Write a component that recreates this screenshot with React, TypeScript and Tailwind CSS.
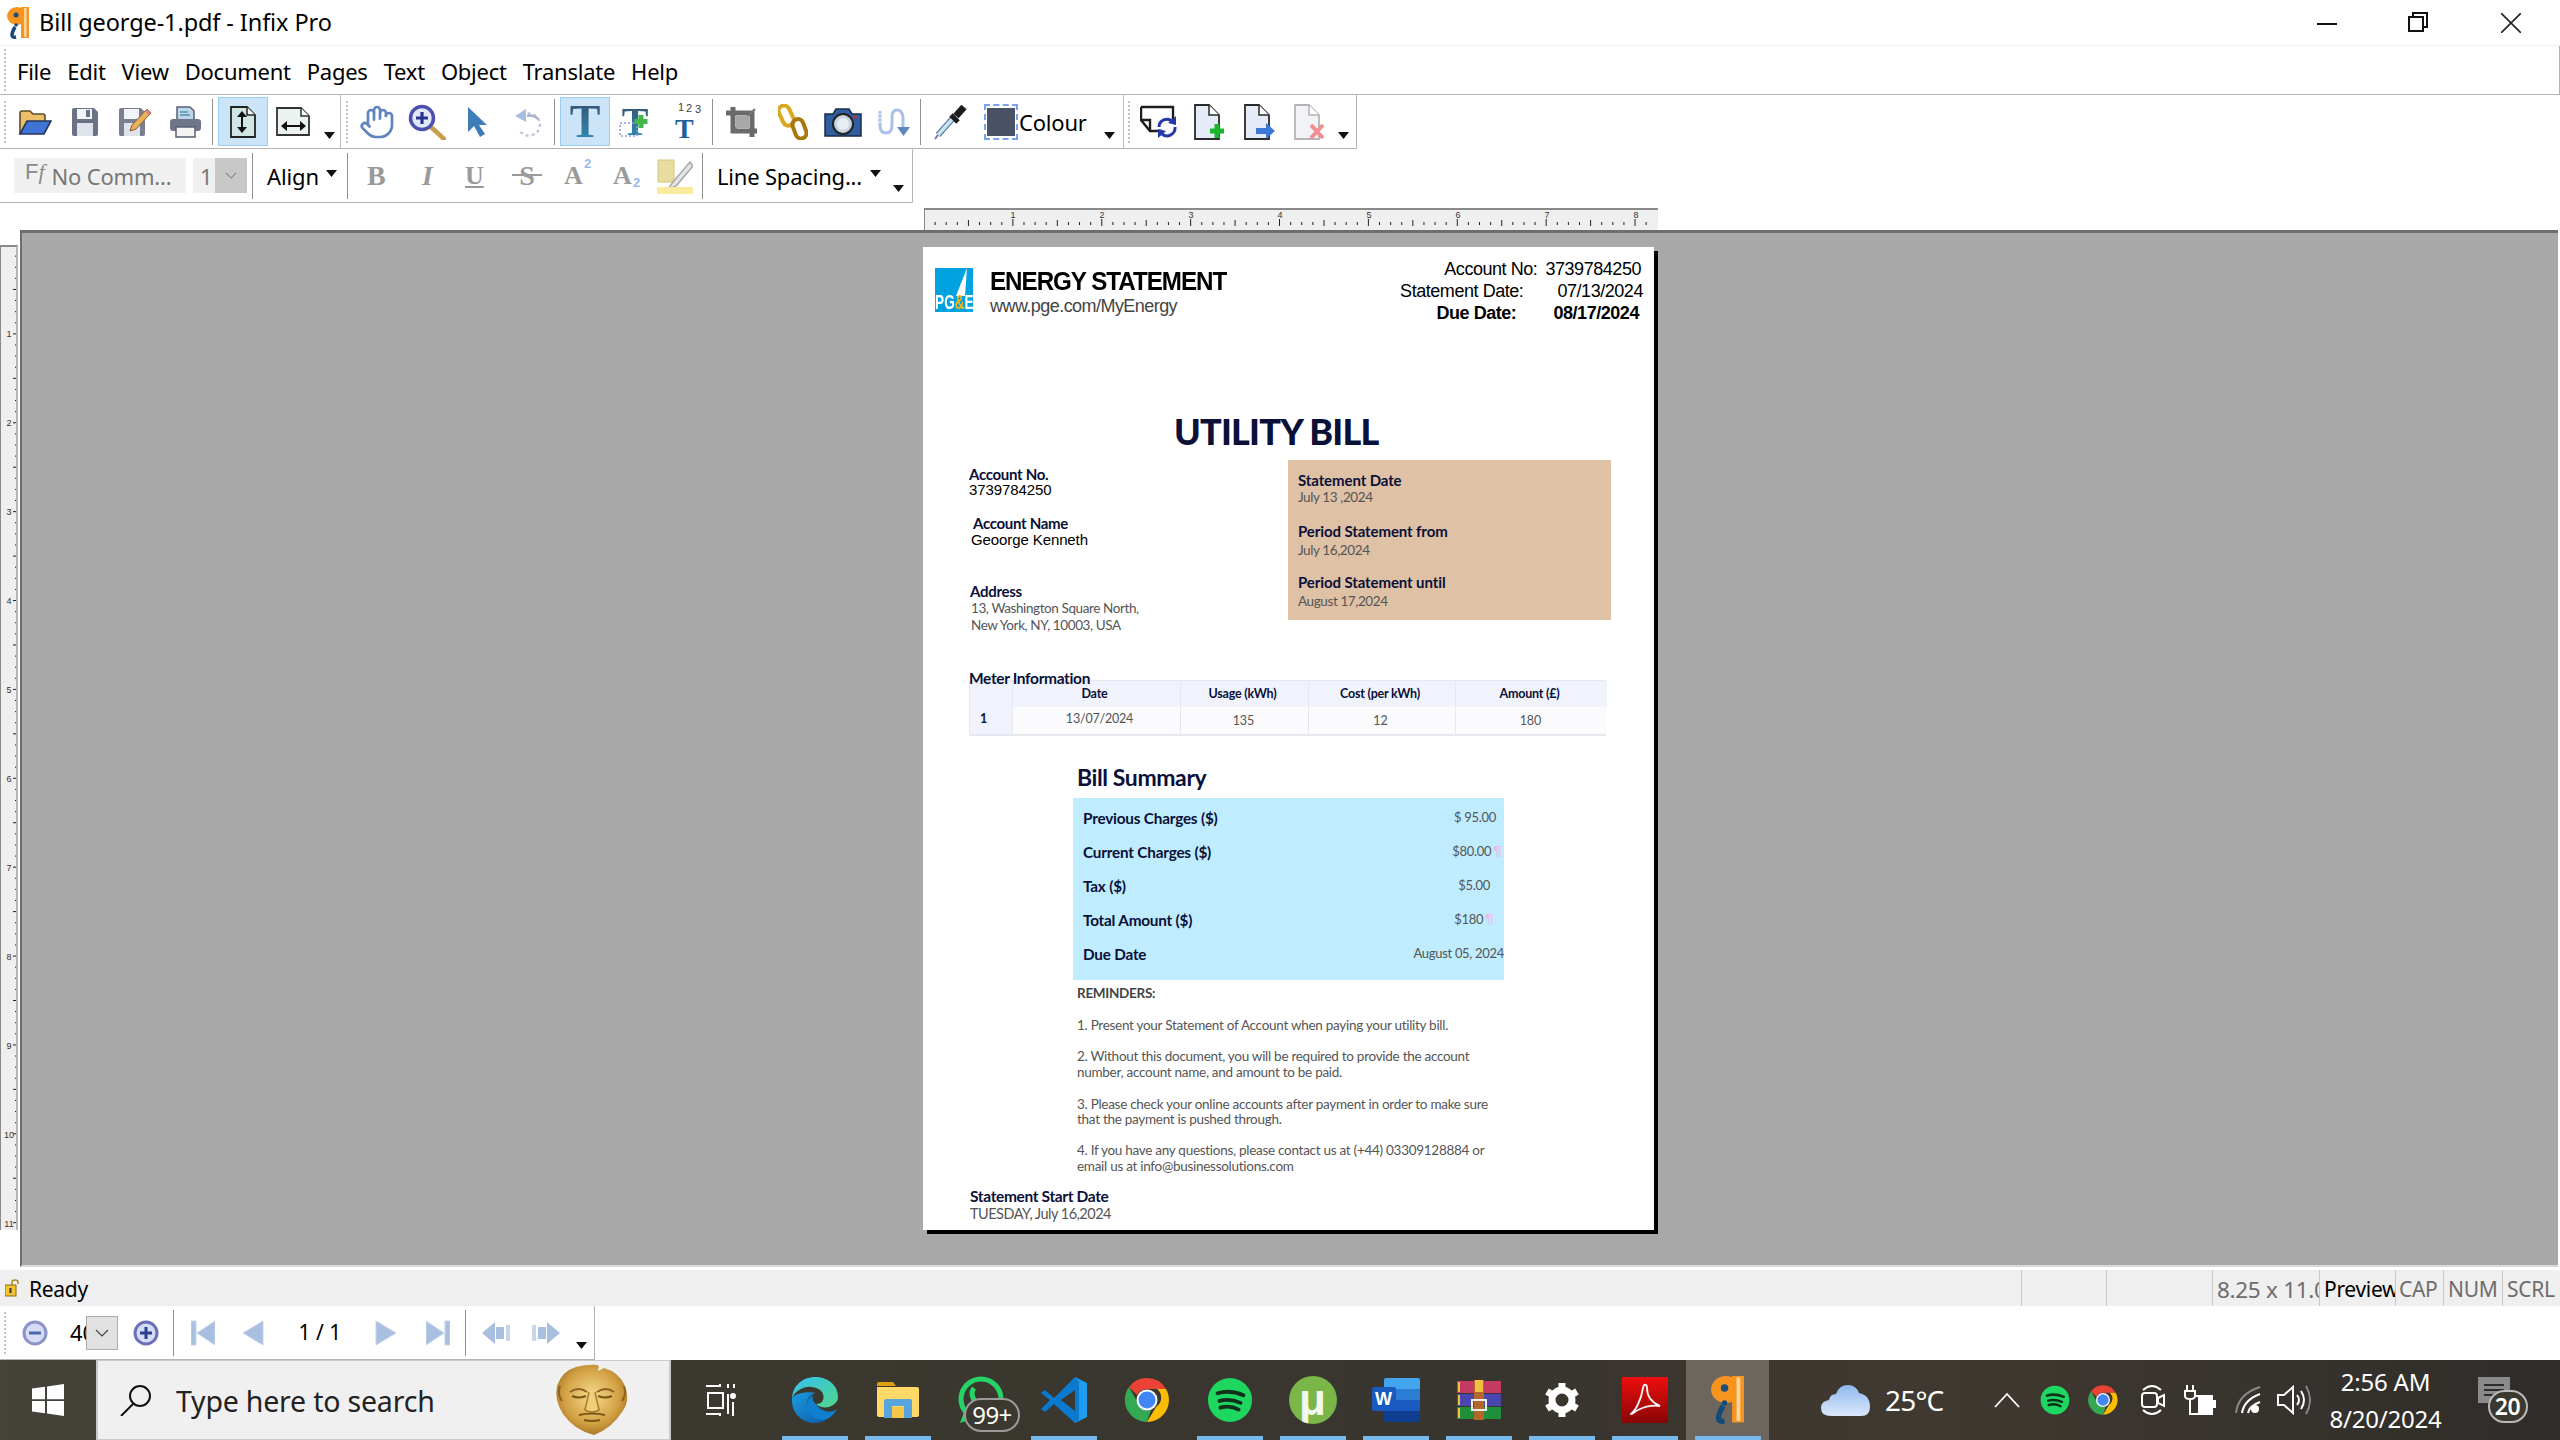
import React from 'react';
import { Hand } from 'lucide-react';

const uiFont = { fontFamily: '"Noto Sans", sans-serif' };
const serif = { fontFamily: '"Liberation Serif", serif' };

const Caret: React.FC<{ className?: string }> = ({ className }) => (
  <svg width="11" height="7" viewBox="0 0 11 7" className={className}>
    <polygon points="0,0 11,0 5.5,7" fill="#111" />
  </svg>
);

const Grip: React.FC = () => (
  <div className="h-[42px] w-0 border-l-2 border-dotted border-[#c4c4c4]" />
);

const Sep: React.FC<{ className?: string }> = ({ className }) => (
  <div className={`h-[46px] w-px bg-[#8f8f8f] ${className ?? ''}`} />
);

const Slot: React.FC<{ active?: boolean; children: React.ReactNode }> = ({ active, children }) => (
  <div
    className={`flex h-[49px] w-[50px] shrink-0 items-center justify-center ${
      active ? 'border border-[#99ccee] bg-[#cce4f7]' : ''
    }`}
  >
    {children}
  </div>
);

/* toolbar drawings */
const FolderIcon = () => (
  <svg width="34" height="28" viewBox="0 0 34 28">
    <path d="M2 26V5q0-2 2-2h8l3 3h10q2 0 2 2v5" fill="#ecc06b" stroke="#5d4c28" strokeWidth="1.6" />
    <path d="M2 26l7-13h24l-7 13z" fill="#3f74d6" stroke="#27345a" strokeWidth="1.6" />
  </svg>
);
const SaveIcon = () => (
  <svg width="28" height="30" viewBox="0 0 28 30">
    <path d="M1 3q0-2 2-2h20l4 4v22q0 2-2 2H3q-2 0-2-2z" fill="#6a7286" />
    <rect x="6" y="2" width="15" height="10" fill="#f2f4f8" />
    <rect x="6" y="16" width="16" height="13" fill="#dfe3ea" />
    <rect x="15" y="3" width="4" height="7" fill="#6a7286" />
  </svg>
);
const SaveAsIcon = () => (
  <svg width="34" height="30" viewBox="0 0 34 30">
    <path d="M1 3q0-2 2-2h20l4 4v22q0 2-2 2H3q-2 0-2-2z" fill="#7a8092" />
    <rect x="6" y="2" width="15" height="10" fill="#f2f4f8" />
    <rect x="6" y="16" width="16" height="13" fill="#dfe3ea" />
    <path d="M29 2l4 4-15 16-6 2 2-6z" fill="#e8b25a" stroke="#8a5a36" strokeWidth="1" />
    <path d="M29 2l4 4-2 2-4-4z" fill="#d9808a" />
  </svg>
);
const PrintIcon = () => (
  <svg width="33" height="32" viewBox="0 0 33 32">
    <path d="M8 1h13l4 4v10H8z" fill="#b9d6ea" stroke="#596072" strokeWidth="1.5" />
    <path d="M11 6h8M11 9h10" stroke="#5a8fb0" strokeWidth="1.4" />
    <rect x="1" y="13" width="31" height="12" rx="3" fill="#6f7689" />
    <rect x="7" y="21" width="19" height="10" fill="#f4f4f4" stroke="#596072" strokeWidth="1.5" />
  </svg>
);
const FitHeightIcon = () => (
  <svg width="26" height="32" viewBox="0 0 26 32">
    <path d="M1 1h16l8 8v22H1z" fill="#cfe6e4" stroke="#222" strokeWidth="1.8" />
    <path d="M17 1v8h8" fill="#f4f4f4" stroke="#222" strokeWidth="1.5" />
    <path d="M12 6v20" stroke="#111" strokeWidth="2" />
    <path d="M7 11l5-6 5 6zM7 21l5 6 5-6z" fill="#111" />
  </svg>
);
const FitWidthIcon = () => (
  <svg width="37" height="30" viewBox="0 0 37 30">
    <path d="M2 1h24l8 8v19H2z" fill="#eaf2f2" stroke="#333" strokeWidth="1.8" />
    <path d="M26 1v8h8" fill="#f8f8f8" stroke="#333" strokeWidth="1.5" />
    <path d="M7 19h23" stroke="#111" strokeWidth="2" />
    <path d="M12 14l-6 5 6 5zM25 14l6 5-6 5z" fill="#111" />
  </svg>
);
const ZoomIcon = () => (
  <svg width="38" height="36" viewBox="0 0 38 36">
    <path d="M23 23l13 12" stroke="#c79f4a" strokeWidth="4.5" strokeLinecap="round" />
    <circle cx="14" cy="14" r="11.5" fill="#e2e8fb" stroke="#4c4fae" strokeWidth="3.5" />
    <path d="M14 8v12M8 14h12" stroke="#28338f" strokeWidth="3.2" />
  </svg>
);
const CursorIcon = () => (
  <svg width="20" height="30" viewBox="0 0 20 30">
    <path d="M1 0v25l6-6 6 11 5-3-6-9h8z" fill="#3f7db8" />
  </svg>
);
const UndoIcon = () => (
  <svg width="28" height="30" viewBox="0 0 28 30">
    <path d="M8 9a11 11 0 1 1-2 15" fill="none" stroke="#bcc7da" strokeWidth="2.4" strokeDasharray="3 3" />
    <path d="M13 9A11 11 0 0 1 24 12" fill="none" stroke="#a9b4c8" strokeWidth="2.4" />
    <polygon points="1,9 12,2 12,15" fill="#a8bcdc" />
  </svg>
);
const SerifT: React.FC<{ className: string }> = ({ className }) => (
  <span
    className={`bg-linear-to-b from-[#34506f] to-[#2a93bb] bg-clip-text leading-none font-bold text-transparent ${className}`}
    style={serif}
  >
    T
  </span>
);
const TPlusIcon = () => (
  <div className="relative flex h-[36px] w-[32px] items-center justify-center">
    <SerifT className="text-[40px]" />
    <svg width="32" height="36" viewBox="0 0 32 36" className="absolute top-0 left-0">
      <rect x="1" y="19" width="17" height="13" fill="none" stroke="#8d9be0" strokeWidth="1.5" strokeDasharray="2 2" />
      <path d="M22 11v13M15.500 17.500h13" stroke="#42b84a" strokeWidth="5" />
    </svg>
  </div>
);
const T123Icon = () => (
  <div className="relative h-[40px] w-[30px] text-[11px] leading-none text-[#444]" style={{ fontFamily: '"Liberation Sans", sans-serif' }}>
    <span className="absolute top-0 left-[6px]">1</span>
    <span className="absolute top-[1px] left-[14px]">2</span>
    <span className="absolute top-[2px] left-[23px]">3</span>
    <span className="absolute top-[13px] left-[3px] text-[28px] leading-none font-bold text-[#1f5f9e]" style={serif}>
      T
    </span>
  </div>
);
const CropIcon = () => (
  <svg width="36" height="34" viewBox="0 0 36 34">
    <path d="M8 2v24h24M1 8h26v24" fill="none" stroke="#6a6a6a" strokeWidth="5" />
    <path d="M10 24L30 4" stroke="#777" strokeWidth="2" />
    <rect x="11" y="11" width="13" height="12" fill="#a8a8a8" />
  </svg>
);
const LinkIcon = () => (
  <svg width="30" height="36" viewBox="0 0 30 36">
    <rect x="2" y="-1" width="11" height="21" rx="5.500" transform="rotate(-25 8 10) translate(0 2)" fill="none" stroke="#d9a81e" strokeWidth="4" />
    <rect x="16" y="15" width="11" height="20" rx="5.500" transform="rotate(-20 21 25)" fill="none" stroke="#a8780c" strokeWidth="4" />
  </svg>
);
const CameraIcon = () => (
  <svg width="38" height="30" viewBox="0 0 38 30">
    <path d="M1 7h8l3-5h13l3 5h9v22H1z" fill="#2f5f9e" stroke="#1c2b48" strokeWidth="1.5" />
    <circle cx="19" cy="17" r="10" fill="#c8d4e2" stroke="#222" strokeWidth="2" />
    <circle cx="19" cy="17" r="6" fill="#e6edf4" />
    <circle cx="31" cy="10" r="1.500" fill="#e02020" />
  </svg>
);
const PathIcon = () => (
  <svg width="34" height="30" viewBox="0 0 34 30">
    <path d="M2 4v14q0 8 6 8t6-8V10q0-7 5-7t6 7v13" fill="none" stroke="#a9c1e4" strokeWidth="3" />
    <path d="M2 2v14" stroke="#fff" strokeWidth="1" strokeDasharray="2 2" />
    <polygon points="19,20 32,20 25.500,29" fill="#5f87bf" />
  </svg>
);
const PipetteIcon = () => (
  <svg width="34" height="36" viewBox="0 0 34 36">
    <path d="M4 31L20 13" stroke="#5a78a8" strokeWidth="6" />
    <path d="M4 31L20 13" stroke="#c9e4ee" strokeWidth="3.500" />
    <path d="M1 35l3-4" stroke="#7a70b8" strokeWidth="2" />
    <path d="M17 11l7 7" stroke="#1d1d1d" strokeWidth="5" />
    <path d="M22 12l8-9" stroke="#1d1d1d" strokeWidth="7" />
  </svg>
);
const SyncIcon = () => (
  <svg width="38" height="36" viewBox="0 0 38 36">
    <path d="M1 3h32v14M1 3v13l9 11h12" fill="#fff" stroke="#1d1d1d" strokeWidth="2.400" />
    <path d="M1 16h9v11" fill="none" stroke="#1d1d1d" strokeWidth="2.400" />
    <path d="M19 23a8 8 0 0 1 13-6" fill="none" stroke="#2438a8" strokeWidth="3" />
    <path d="M35 23a8 8 0 0 1-13 7" fill="none" stroke="#2438a8" strokeWidth="3" />
    <polygon points="36,12 36,21 28,19" fill="#2438a8" />
    <polygon points="18,34 18,25 26,27" fill="#2438a8" />
  </svg>
);
const PageBase: React.FC<{ faded?: boolean; children?: React.ReactNode }> = ({ faded, children }) => (
  <svg width="32" height="36" viewBox="0 0 32 36">
    <path
      d="M1 1h14l10 10v24H1z"
      fill={faded ? '#f1f3f6' : '#e6ecf7'}
      stroke={faded ? '#b5b5b5' : '#2a2a2a'}
      strokeWidth="1.800"
    />
    <path d="M15 1v10h10" fill="#fff" stroke={faded ? '#b5b5b5' : '#2a2a2a'} strokeWidth="1.500" />
    {children}
  </svg>
);
const Navs = {
  first: 'M0 1h5v24H0zM24 1v24L6 13z',
  prev: 'M21 1v24L1 13z',
  next: 'M1 1v24l20-12z',
  last: 'M19 1h5v24h-5zM0 1v24l18-12z',
};
const NavIcon: React.FC<{ d: string }> = ({ d }) => (
  <svg width="24" height="26" viewBox="0 0 24 26">
    <path d={d} fill="#a9bfe0" stroke="#c5d3ea" strokeWidth="1" />
  </svg>
);
const RoundIcon: React.FC<{ plus?: boolean }> = ({ plus }) => (
  <svg width="26" height="26" viewBox="0 0 26 26">
    <circle cx="13" cy="13" r="11" fill="#d5dcf3" stroke={plus ? '#6a70b8' : '#8c93c8'} strokeWidth="3" />
    <path d={plus ? 'M13 7v12M7 13h12' : 'M7 13h12'} stroke={plus ? '#28408f' : '#4a68a8'} strokeWidth="3" />
  </svg>
);
const GhostArrow: React.FC<{ flip?: boolean }> = ({ flip }) => (
  <svg width="30" height="24" viewBox="0 0 30 24" className={flip ? '-scale-x-100' : ''}>
    <path d="M0 12L13 1v22z" fill="#a9bfe0" />
    <rect x="14" y="6" width="8" height="12" fill="#a9bfe0" />
    <rect x="24" y="4" width="4" height="16" fill="#c9d6ea" />
  </svg>
);

/* app logos in the taskbar */
const ChromeIcon: React.FC<{ size: number }> = ({ size }) => (
  <svg width={size} height={size} viewBox="0 0 48 48">
    <path d="M24 2a22 22 0 0 1 19 11H24a11 11 0 0 0-10 6L6 11A22 22 0 0 1 24 2z" fill="#ea4335" />
    <path d="M43 13a22 22 0 0 1-19 33l9-15a11 11 0 0 0 1-18z" fill="#fbbc04" />
    <path d="M24 46A22 22 0 0 1 6 11l9 16a11 11 0 0 0 13 7z" fill="#34a853" />
    <circle cx="24" cy="24" r="10.500" fill="#fff" />
    <circle cx="24" cy="24" r="8.500" fill="#4285f4" />
  </svg>
);
const SpotifyIcon: React.FC<{ size: number }> = ({ size }) => (
  <svg width={size} height={size} viewBox="0 0 48 48">
    <circle cx="24" cy="24" r="23" fill="#1ed760" />
    <path d="M11 17q13-4 27 2M13 25q11-3 22 2M14 32q10-3 19 2" fill="none" stroke="#10301c" strokeWidth="4" strokeLinecap="round" />
  </svg>
);
const EdgeIcon = () => (
  <svg width="48" height="48" viewBox="0 0 48 48">
    <defs>
      <linearGradient id="edge-a" x1="0" y1="0" x2="1" y2="1">
        <stop offset="0" stopColor="#35c1f1" />
        <stop offset="1" stopColor="#4fd68a" />
      </linearGradient>
      <linearGradient id="edge-b" x1="0" y1="0" x2="1" y2="1">
        <stop offset="0" stopColor="#1b9de2" />
        <stop offset="1" stopColor="#0c59a4" />
      </linearGradient>
    </defs>
    <path d="M24 1C11 1 2 10 1 22c4-8 12-12 20-11 10 1 13 8 11 13-1 3-4 4-7 4 3 3 8 4 13 3 5-2 9-5 9-10C47 9 37 1 24 1z" fill="url(#edge-a)" />
    <path d="M1 22C0 36 10 47 24 47c5 0 10-2 14-5-9 3-20-1-22-10-2-8 3-14 9-15-9-2-20 0-24 5z" fill="url(#edge-b)" />
    <path d="M25 28c-3-2-4-6-3-9-8 4-9 15-2 21 5 4 12 5 18 2 3-2 6-5 8-9-6 5-16 3-21-5z" fill="#0f7fd0" />
  </svg>
);
const ExplorerIcon = () => (
  <svg width="44" height="38" viewBox="0 0 44 38">
    <path d="M1 3q0-2 2-2h14l3 4H1z" fill="#d9a00f" />
    <path d="M1 6h40q2 0 2 2v26q0 2-2 2H3q-2 0-2-2z" fill="#ffd968" />
    <path d="M8 37V20q0-2 2-2h24q2 0 2 2v17h-8V25H16v12z" fill="#5aa4dd" />
    <rect x="16" y="26" width="12" height="11" fill="#f4c64a" />
  </svg>
);
const WhatsAppIcon = () => (
  <svg width="48" height="50" viewBox="0 0 48 50">
    <circle cx="24" cy="24" r="20" fill="none" stroke="#25d366" strokeWidth="5" />
    <path d="M8 34L3 48l14-5z" fill="#25d366" />
    <path d="M17 13q-4 5 0 12t13 11" fill="none" stroke="#25d366" strokeWidth="5" />
  </svg>
);
const VsCodeIcon = () => (
  <svg width="48" height="48" viewBox="0 0 48 48">
    <path d="M35 1l12 6v34l-12 6z" fill="#1f9cf0" />
    <path d="M35 1L14 22 5 14 1 17l9 7-9 9 4 3 9-8 21 19 4-3V6z" fill="#0a7ad0" />
    <path d="M35 14L21 24l14 11z" fill="#3a3830" />
  </svg>
);
const UTorrentIcon = () => (
  <div className="relative flex h-[48px] w-[48px] items-center justify-center overflow-hidden rounded-full bg-[#7ab648]">
    <span className="text-[44px] leading-none font-bold text-[#f4f6ef]" style={{ fontFamily: '"Liberation Sans", sans-serif' }}>
      μ
    </span>
  </div>
);
const WordIcon = () => (
  <div className="relative h-[44px] w-[48px]">
    <div className="absolute top-0 right-0 h-[44px] w-[36px] rounded-[2px] bg-[linear-gradient(180deg,#41a5ee_0%,#41a5ee_25%,#2b7cd3_25%,#2b7cd3_50%,#185abd_50%,#185abd_75%,#103f91_75%)]" />
    <div className="absolute top-[9px] left-0 flex h-[24px] w-[24px] items-center justify-center rounded-[2px] bg-[#185abd] text-[18px] font-bold text-white" style={{ fontFamily: '"Liberation Sans", sans-serif' }}>
      W
    </div>
  </div>
);
const RarIcon = () => (
  <svg width="46" height="40" viewBox="0 0 46 40">
    <rect x="1" y="1" width="44" height="12" fill="#c43a62" />
    <rect x="1" y="14" width="44" height="12" fill="#4a46b0" />
    <rect x="1" y="27" width="44" height="12" fill="#1f8f3a" />
    <rect x="2" y="2" width="2" height="10" fill="#f0c040" />
    <rect x="2" y="15" width="2" height="10" fill="#f0c040" />
    <rect x="2" y="28" width="2" height="10" fill="#f0c040" />
    <rect x="18" y="0" width="10" height="40" fill="#b5662a" />
    <rect x="19" y="0" width="8" height="12" fill="#f0c040" />
    <rect x="16" y="20" width="14" height="10" fill="none" stroke="#eee" strokeWidth="2" />
  </svg>
);
const GearIcon = () => (
  <svg width="36" height="36" viewBox="0 0 36 36">
    <circle cx="18" cy="18" r="10" fill="none" stroke="#fff" strokeWidth="7" />
    <path d="M18 1v7M18 28v7M3 9.500l6 3.500M27 23l6 3.500M3 26.500L9 23M27 13l6-3.500" stroke="#fff" strokeWidth="7" />
  </svg>
);
const AcrobatIcon = () => (
  <svg width="46" height="46" viewBox="0 0 46 46">
    <defs>
      <linearGradient id="acro" x1="0" y1="0" x2="0" y2="1">
        <stop offset="0" stopColor="#ee0f0f" />
        <stop offset="1" stopColor="#880505" />
      </linearGradient>
    </defs>
    <rect width="46" height="46" fill="url(#acro)" />
    <path d="M9 37c5-4 10-14 12-26 1-5 4-4 4 0 0 9 6 15 13 18-8-1-16 1-22 4-4 2-6 5-7 4z" fill="none" stroke="#f4f4f4" strokeWidth="1.800" />
  </svg>
);
const InfixIcon: React.FC<{ size: number }> = ({ size }) => (
  <svg width={size * 0.69} height={size} viewBox="0 0 22 32">
    <ellipse cx="10" cy="9" rx="10" ry="9" fill="#f7941d" />
    <rect x="14" y="0" width="8" height="31" fill="#f7941d" />
    <rect x="17" y="1" width="2.500" height="29" fill="#fcd5a0" />
    <circle cx="9" cy="8" r="2.500" fill="#1f4f78" />
    <path d="M8 20q-3 5-3 8 0 3 4 2" fill="none" stroke="#14497a" strokeWidth="3.500" />
    <circle cx="9" cy="18" r="1.800" fill="#14497a" />
  </svg>
);
const MaskIcon = () => (
  <svg width="76" height="72" viewBox="0 0 76 72">
    <defs>
      <radialGradient id="mask" cx="0.5" cy="0.45" r="0.6">
        <stop offset="0" stopColor="#f6dc8e" />
        <stop offset="0.65" stopColor="#d3a043" />
        <stop offset="1" stopColor="#9c6d1f" />
      </radialGradient>
    </defs>
    <path d="M36 1q6-1 9 1l-1 5 6-3q14 4 20 16c5 12 4 20-2 28Q58 64 40 71 20 66 9 50 0 36 3 22 8 7 22 3q7-2 14-2z" fill="url(#mask)" />
    <path d="M16 28q9-6 17 0M43 28q9-6 17 0" fill="none" stroke="#8d6320" strokeWidth="2" />
    <path d="M18 32q7 3 14 0M44 32q7 3 14 0" fill="none" stroke="#7a5518" strokeWidth="2" />
    <path d="M35 28l-4 18q7 4 14 0l-4-18" fill="#f0cf7a" stroke="#a97a2a" strokeWidth="1.500" />
    <path d="M25 51q13-3 26 0M30 56q8 2 16 0" fill="none" stroke="#7a5518" strokeWidth="2" />
    <path d="M6 22q-3 8 2 15M70 22q3 8-2 15" fill="none" stroke="#8d6320" strokeWidth="2" />
  </svg>
);

/* rulers */
const TopRuler = () => {
  const ticks = Array.from({ length: 66 }, (_, i) => i);
  return (
    <svg width="733" height="19" className="block">
      {ticks.map((i) => (
        <rect key={i} x={i * 11.11 - 1.5} y={i % 8 === 0 ? 9 : i % 4 === 0 ? 10 : 12} width="1" height={i % 8 === 0 ? 7 : i % 4 === 0 ? 6 : 3} fill="#222" />
      ))}
      {[1, 2, 3, 4, 5, 6, 7, 8].map((n) => (
        <text key={n} x={n * 89 - 1} y="8" textAnchor="middle" fontSize="9" fontFamily='"Liberation Sans", sans-serif' fill="#333">
          {n}
        </text>
      ))}
    </svg>
  );
};
const SideRuler = () => {
  const ticks = Array.from({ length: 89 }, (_, i) => i);
  return (
    <svg width="16" height="983" className="block">
      {ticks.map((i) => (
        <rect key={i} x={i % 4 === 0 ? 12 : 14} y={i * 11.11 - 2.5} width={i % 4 === 0 ? 4 : 2} height="1" fill="#222" />
      ))}
      {[1, 2, 3, 4, 5, 6, 7, 8, 9, 10, 11].map((n) => (
        <text key={n} x="8" y={n * 89 + 1} textAnchor="middle" fontSize="9" fontFamily='"Liberation Sans", sans-serif' fill="#333">
          {n}
        </text>
      ))}
    </svg>
  );
};

/* pdf */
const pdfSans = { fontFamily: '"Liberation Sans", sans-serif' };
const pdfBody = { fontFamily: 'Lato, sans-serif' };

const summary = [
  { label: 'Previous Charges ($)', value: '$ 95.00', pr: 'pr-[8px]' },
  { label: 'Current Charges ($)', value: '$80.00', mark: true, pr: 'pr-[2px]' },
  { label: 'Tax ($)', value: '$5.00', pr: 'pr-[14px]' },
  { label: 'Total Amount ($)', value: '$180', mark: true, pr: 'pr-[10px]' },
  { label: 'Due Date', value: 'August 05, 2024', pr: 'pr-0' },
];

const cellHead = 'flex items-center justify-center border-l border-[#e6e8f0] bg-[#f0f3fc] pt-[1px] pr-[4px] font-bold tracking-[-0.2px]';
const cellBody = 'flex items-center justify-center border-l border-[#e6e8f0] bg-[#fbfbfe] text-[#555]';

const BillPage = () => (
  <div className="h-[983px] w-[731px] shrink-0 overflow-hidden bg-white shadow-[4px_4px_0_#000]" style={pdfBody}>
    <div className="flex h-[77px] items-start pt-[11px] pl-[12px]">
      <div className="relative mt-[10px] flex h-[44px] w-[38px] shrink-0 items-end justify-center overflow-hidden bg-[#00a3e0]">
        <svg width="38" height="28" className="absolute top-0 left-0">
          <polygon points="32,0 30,28 21,28" fill="#fff" />
        </svg>
        <div className="relative scale-x-[0.68] text-[20px] leading-[20px] font-bold whitespace-nowrap text-white" style={pdfSans}>
          PG<span className="text-[#fdb515]">&amp;</span>E
        </div>
      </div>
      <div className="mt-[9px] ml-[17px] w-[220px]" style={pdfSans}>
        <div className="origin-left scale-x-[0.93] text-[26px] leading-[28px] font-bold tracking-[-1.1px] whitespace-nowrap text-black">ENERGY STATEMENT</div>
        <div className="mt-[1px] text-[18px] leading-[20px] tracking-[-0.55px] whitespace-nowrap text-[#444]">www.pge.com/MyEnergy</div>
      </div>
      <div className="ml-auto text-[18px] leading-[22px] tracking-[-0.45px] text-black" style={pdfSans}>
        <div className="flex justify-end gap-[8px] pr-[13px]">
          <span>Account No:</span>
          <span>3739784250</span>
        </div>
        <div className="flex justify-end gap-[34px] pr-[11px]">
          <span>Statement Date:</span>
          <span>07/13/2024</span>
        </div>
        <div className="flex justify-end gap-[37px] pr-[15px] font-bold">
          <span>Due Date:</span>
          <span>08/17/2024</span>
        </div>
      </div>
    </div>

    <div className="mt-[85px] pl-[251px] text-[36px] leading-[44px] font-black tracking-[-0.8px] text-[#0a1038]">UTILITY BILL</div>

    <div className="mt-[7px] flex h-[160px] pl-[46px]">
      <div className="w-[319px] pt-[6px] text-[#0a1038]">
        <div className="text-[15px] leading-[16px] font-bold tracking-[-0.3px]">Account No.</div>
        <div className="text-[15px] leading-[16px] tracking-[-0.1px] text-black" style={pdfSans}>3739784250</div>
        <div className="mt-[17px] ml-[4px] text-[15px] leading-[16px] font-bold tracking-[-0.3px]">Account Name</div>
        <div className="mt-[1px] ml-[2px] text-[15px] leading-[16px] tracking-[-0.1px] text-black" style={pdfSans}>Geoorge Kenneth</div>
        <div className="mt-[35px] ml-[1px] text-[15px] leading-[16px] font-bold tracking-[-0.3px]">Address</div>
        <div className="mt-[1px] ml-[2px] text-[13.500px] leading-[17px] tracking-[-0.4px] text-[#555]">
          13, Washington Square North,
          <br />
          New York, NY, 10003, USA
        </div>
      </div>
      <div className="w-[323px] bg-[#dfc1a5] pt-[12px] pl-[10px] text-[13.500px] leading-[16px]">
        <div className="text-[15px] font-bold tracking-[-0.1px] text-[#0a1038]">Statement Date</div>
        <div className="mt-[1px] tracking-[-0.4px] text-[#555]">July 13 ,2024</div>
        <div className="mt-[18px] text-[15px] font-bold tracking-[-0.1px] text-[#0a1038]">Period Statement from</div>
        <div className="mt-[3px] tracking-[-0.4px] text-[#555]">July 16,2024</div>
        <div className="mt-[16px] text-[15px] font-bold tracking-[-0.1px] text-[#0a1038]">Period Statement until</div>
        <div className="mt-[3px] tracking-[-0.4px] text-[#555]">August 17,2024</div>
      </div>
    </div>

    <div className="relative z-10 mt-[50px] ml-[46px] text-[15.500px] leading-[16px] font-bold tracking-[-0.35px] text-[#0a1038]">Meter Information</div>
    <div className="mt-[-6px] ml-[46px] grid w-[637px] grid-cols-[42px_168px_128px_147px_152px] grid-rows-[26px_27px] border-t border-r border-b-2 border-l border-[#e6e8f0] text-center text-[12.500px] text-[#0a1038]">
      <div className="row-span-2 flex items-end bg-[#f0f3fc] pb-[5px] pl-[10px] text-left font-bold">1</div>
      <div className={cellHead}>Date</div>
      <div className={cellHead}>Usage (kWh)</div>
      <div className={cellHead}>Cost (per kWh)</div>
      <div className={cellHead}>Amount (£)</div>
      <div className={`${cellBody} pr-[4px] pb-[2px] pl-[10px] tracking-[-0.2px]`}>13/07/2024</div>
      <div className={`${cellBody} pt-[1px] pr-[2px]`}>135</div>
      <div className={`${cellBody} pt-[1px] pr-[3px]`}>12</div>
      <div className={`${cellBody} pt-[1px] pr-[2px]`}>180</div>
    </div>

    <div className="mt-[27px] ml-[154px] text-[23px] leading-[28px] font-bold tracking-[-0.4px] text-[#0a1038]">Bill Summary</div>
    <div className="mt-[7px] ml-[150px] h-[182px] w-[431px] bg-[#bfecff] pt-[3px] pl-[10px]">
      {summary.map((row) => (
        <div key={row.label} className={`flex h-[34px] items-center justify-between ${row.pr}`}>
          <span className="text-[15.300px] font-bold tracking-[-0.2px] text-[#0a1038]">{row.label}</span>
          <span className="mb-[1px] whitespace-nowrap text-[13px] tracking-[-0.3px] text-[#555]">
            {row.value}
            {row.mark && <span className="ml-[2px] text-[#f5b8e8]">¶</span>}
          </span>
        </div>
      ))}
    </div>

    <div className="mt-[5px] ml-[154px] w-[400px] text-[13.500px] leading-[16px] tracking-[-0.28px] whitespace-nowrap text-[#555]">
      <div className="font-bold tracking-[-0.3px] text-[#444]">REMINDERS:</div>
      <div className="mt-[16px]">1. Present your Statement of Account when paying your utility bill.</div>
      <div className="mt-[15px]">2. Without this document, you will be required to provide the account</div>
      <div>number, account name, and amount to be paid.</div>
      <div className="mt-[16px]">3. Please check your online accounts after payment in order to make sure</div>
      <div className="mt-[-1px]">that the payment is pushed through.</div>
      <div className="mt-[15px]">4. If you have any questions, please contact us at (+44) 03309128884  or</div>
      <div>email us at info@businessolutions.com</div>
    </div>
    <div className="mt-[14px] ml-[47px] text-[15.500px] leading-[16px] font-bold tracking-[-0.35px] text-[#0a1038]">Statement Start Date</div>
    <div className="mt-[2px] ml-[47px] text-[14.500px] leading-[16px] tracking-[-0.5px] text-[#555]">TUESDAY, July 16,2024</div>
  </div>
);

const menus = ['File', 'Edit', 'View', 'Document', 'Pages', 'Text', 'Object', 'Translate', 'Help'];

const Underline: React.FC = () => <div className="absolute right-[8px] bottom-0 left-[9px] h-[4px] bg-[#76b9ed]" />;

const TaskSlot: React.FC<{ on?: boolean; active?: boolean; children: React.ReactNode }> = ({ on, active, children }) => (
  <div className={`relative flex h-full w-[83px] shrink-0 items-center justify-center ${active ? 'bg-[#6c665e]' : ''}`}>
    {children}
    {on && <Underline />}
  </div>
);

export default function App() {
  return (
    <div className="flex h-[1440px] w-[2560px] flex-col overflow-hidden bg-white text-black" style={uiFont}>
      {/* title bar */}
      <div className="flex h-[46px] shrink-0 items-center border-b border-[#f0f0f0] pl-[7px]">
        <InfixIcon size={32} />
        <span className="ml-[10px] text-[23.500px] tracking-[-0.1px]">Bill george-1.pdf - Infix Pro</span>
        <div className="ml-auto flex items-center">
          <svg width="20" height="20" viewBox="0 0 20 20" className="mr-[71px]"><rect y="10" width="20" height="2" fill="#111" /></svg>
          <svg width="20" height="20" viewBox="0 0 20 20" className="mr-[73px] mb-[1px]">
            <path d="M1 5h14v14H1zM5 5V1h14v14h-4" fill="none" stroke="#111" strokeWidth="2" />
          </svg>
          <svg width="20" height="20" viewBox="0 0 20 20" className="mr-[39px]">
            <path d="M0 0l20 20M20 0L0 20" stroke="#222" strokeWidth="1.600" />
          </svg>
        </div>
      </div>

      {/* menu bar */}
      <div className="flex h-[49px] w-[2560px] shrink-0 items-center gap-[10px] border-r border-b border-[#b5b5b5] pl-[4px] text-[22px] tracking-[-0.25px]">
        <Grip />
        <div className="mt-[2px] ml-[1px] flex gap-[16px]">
          {menus.map((m) => (
            <span key={m}>{m}</span>
          ))}
        </div>
      </div>

      {/* main toolbar */}
      <div className="flex h-[54px] w-[1357px] shrink-0 items-center border-r border-b border-[#b5b5b5] pl-[4px]">
        <Grip />
        <div className="w-[4px]" />
        <Slot><FolderIcon /></Slot>
        <Slot><SaveIcon /></Slot>
        <Slot><SaveAsIcon /></Slot>
        <Slot><PrintIcon /></Slot>
        <Sep className="mr-[5px] ml-[2px]" />
        <Slot active><FitHeightIcon /></Slot>
        <Slot><FitWidthIcon /></Slot>
        <div className="flex h-full w-[22px] items-end pb-[9px] pl-[6px]"><Caret /></div>
        <div className="h-full w-px bg-[#c0c0c0]" />
        <div className="w-[5px]" />
        <Grip />
        <div className="w-[4px]" />
        <Slot><Hand size={36} color="#5f84bf" fill="#ffffff" strokeWidth={1.8} /></Slot>
        <Slot><ZoomIcon /></Slot>
        <Slot><CursorIcon /></Slot>
        <div className="w-px" />
        <Slot><UndoIcon /></Slot>
        <Sep className="mr-[5px] ml-px" />
        <Slot active><SerifT className="text-[46px]" /></Slot>
        <Slot><TPlusIcon /></Slot>
        <div className="w-[2px]" />
        <Slot><T123Icon /></Slot>
        <Sep className="mr-[5px]" />
        <Slot><CropIcon /></Slot>
        <Slot><LinkIcon /></Slot>
        <Slot><CameraIcon /></Slot>
        <div className="w-[2px]" />
        <Slot><PathIcon /></Slot>
        <Sep className="mr-[5px]" />
        <Slot><PipetteIcon /></Slot>
        <div className="ml-[8px] flex h-[36px] w-[34px] items-center justify-center border-2 border-dashed border-[#7aa0ee]">
          <div className="h-[28px] w-[28px] bg-[#4a5164]" />
        </div>
        <span className="mt-[2px] ml-[1px] w-[85px] text-[22px] tracking-[-0.2px]">Colour</span>
        <div className="flex h-full w-[19px] items-end pb-[9px]"><Caret /></div>
        <div className="h-full w-px bg-[#c0c0c0]" />
        <div className="w-[4px]" />
        <Grip />
        <div className="w-[4px]" />
        <Slot><SyncIcon /></Slot>
        <div className="w-px" />
        <Slot>
          <PageBase>
            <path d="M23 20v14M16 27h14" stroke="#1eb52e" strokeWidth="5" />
          </PageBase>
        </Slot>
        <Slot>
          <PageBase>
            <path d="M12 24h10v-5l9 8-9 8v-5H12z" fill="#3c78d8" />
          </PageBase>
        </Slot>
        <Slot>
          <PageBase faded>
            <path d="M17 21l12 13M29 21L17 34" stroke="#ef8f8f" strokeWidth="4" />
          </PageBase>
        </Slot>
        <div className="flex h-full flex-1 items-end pb-[9px] pl-[3px]"><Caret /></div>
      </div>

      {/* format toolbar */}
      <div className="flex h-[54px] w-[913px] shrink-0 items-center border-r border-b border-[#b5b5b5] pl-[14px]">
        <div className="flex h-[35px] w-[172px] items-center bg-[#f0f0f0] pl-[11px] text-[#777]">
          <span className="mb-[8px] text-[22px] leading-none text-[#8a8a8a]" style={pdfSans}>
            F<i style={serif}>f</i>
          </span>
          <span className="mt-[2px] ml-[7px] text-[22px] tracking-[-0.2px] whitespace-nowrap">No Comm...</span>
        </div>
        <div className="ml-[7px] flex h-[35px] w-[54px] items-center bg-[#f0f0f0] pl-[7px] text-[22px] text-[#777]">
          <span className="mt-[2px] w-[15px]">1</span>
          <div className="flex h-full flex-1 items-center justify-center bg-[#c8c8c8]">
            <svg width="12" height="8" viewBox="0 0 12 8"><path d="M1 1l5 5 5-5" fill="none" stroke="#8e8e8e" strokeWidth="1.200" /></svg>
          </div>
        </div>
        <Sep className="mx-[5px]" />
        <span className="mt-[2px] ml-[9px] text-[22px] tracking-[-0.1px]">Align</span>
        <Caret className="mb-[4px] ml-[7px]" />
        <Sep className="ml-[10px]" />
        <div className="flex items-center text-[#9a9a9a]" style={serif}>
          <span className="ml-[19px] w-[19px] text-[28px] font-bold">B</span>
          <span className="ml-[36px] w-[13px] text-[28px] font-bold italic">I</span>
          <span className="ml-[30px] w-[25px] text-[26px] font-bold underline underline-offset-2">U</span>
          <span className="relative ml-[22px] w-[30px] text-center text-[28px] font-bold">
            S<span className="absolute top-[19px] left-0 h-[2px] w-[30px] bg-[#9a9a9a]" />
          </span>
          <span className="relative ml-[22px] w-[30px] text-[26px] font-bold">
            A<span className="absolute top-[-2px] left-[20px] text-[13px] text-[#9cb8f0]" style={pdfSans}>2</span>
          </span>
          <span className="relative ml-[19px] w-[30px] text-[26px] font-bold">
            A<span className="absolute top-[17px] left-[20px] text-[13px] text-[#9cb8f0]" style={pdfSans}>2</span>
          </span>
        </div>
        <svg width="36" height="36" viewBox="0 0 36 36" className="ml-[14px]">
          <rect x="1" y="2" width="16" height="22" fill="#e9dca0" stroke="#d4c67a" />
          <path d="M33 4l-17 20-5 7 8-3 17-20z" fill="#e4e4e4" stroke="#aaa" strokeWidth="1.500" />
          <rect x="0" y="29" width="36" height="7" fill="#fbeb9c" />
        </svg>
        <Sep className="ml-[9px]" />
        <span className="mt-[2px] ml-[14px] text-[22px] tracking-[-0.2px] whitespace-nowrap">Line Spacing...</span>
        <Caret className="mb-[4px] ml-[8px]" />
        <Caret className="mt-[26px] ml-[12px]" />
      </div>

      {/* horizontal ruler */}
      <div className="flex h-[27px] shrink-0 items-end pl-[924px]">
        <div className="h-[22px] w-[734px] border-t-2 border-l border-[#8a8a8a] bg-[#efefef]">
          <TopRuler />
        </div>
      </div>

      {/* work area */}
      <div className="flex min-h-0 flex-1">
        <div className="w-[20px] shrink-0 pt-[15px]">
          <div className="h-[985px] w-[18px] overflow-hidden border-t-2 border-r-2 border-l border-t-[#8a8a8a] border-r-[#b5b5b5] border-l-[#8a8a8a] bg-[#efefef]">
            <SideRuler />
          </div>
        </div>
        <div className="mb-[3px] flex flex-1 border-t-[3px] border-b-2 border-l-2 border-t-[#6e6e6e] border-b-[#d8d8d8] border-l-[#6e6e6e] bg-[#a9a9a9] pt-[14px] pl-[901px]">
          <BillPage />
        </div>
        <div className="w-[2px] shrink-0" />
      </div>

      {/* status bar */}
      <div className="flex h-[36px] shrink-0 items-stretch bg-[#efefef] text-[21px] tracking-[-0.3px]">
        <div className="flex flex-1 items-center pl-[5px]">
          <svg width="14" height="18" viewBox="0 0 14 18">
            <path d="M7 6V3q0-2 3-2t3 2v2" fill="none" stroke="#b08a20" strokeWidth="1.500" />
            <rect x="0" y="6" width="11" height="11" fill="#f4c430" stroke="#8a6a10" />
            <rect x="4.500" y="9" width="2" height="5" fill="#333" />
          </svg>
          <span className="mt-[3px] ml-[10px]">Ready</span>
        </div>
        <div className="w-[85px] border-l border-[#c8c8c8]" />
        <div className="w-[106px] border-l border-[#c8c8c8]" />
        <div className="flex w-[107px] items-center overflow-hidden border-l border-[#c8c8c8] pt-[3px] pl-[4px] text-[22.500px] whitespace-nowrap text-[#6d6d6d]">8.25 x 11.0</div>
        <div className="flex w-[76px] items-center overflow-hidden border-l border-[#c8c8c8] pt-[3px] pl-[4px] whitespace-nowrap">Preview</div>
        <div className="flex w-[48px] items-center overflow-hidden border-l border-[#c8c8c8] pt-[3px] pl-[3px] text-[#6d6d6d]">CAP</div>
        <div className="flex w-[59px] items-center overflow-hidden border-l border-[#c8c8c8] pt-[3px] pl-[4px] text-[#6d6d6d]">NUM</div>
        <div className="flex w-[58px] items-center overflow-hidden border-l border-[#c8c8c8] pt-[3px] pl-[4px] text-[#6d6d6d]">SCRL</div>
      </div>

      {/* page nav toolbar */}
      <div className="flex h-[54px] w-[595px] shrink-0 items-center border-r border-b border-[#b5b5b5] pl-[4px]">
        <Grip />
        <div className="ml-[16px]"><RoundIcon /></div>
        <div className="ml-[22px] w-[16px] overflow-hidden text-[22px] whitespace-nowrap">40%</div>
        <div className="flex h-[34px] w-[32px] items-center justify-center border border-[#adadad] bg-[#e1e1e1]">
          <svg width="14" height="8" viewBox="0 0 14 8"><path d="M1 1l6 6 6-6" fill="none" stroke="#444" strokeWidth="1.200" /></svg>
        </div>
        <div className="ml-[15px]"><RoundIcon plus /></div>
        <Sep className="ml-[14px]" />
        <div className="ml-[17px]"><NavIcon d={Navs.first} /></div>
        <div className="ml-[27px]"><NavIcon d={Navs.prev} /></div>
        <span className="ml-[32px] w-[44px] text-center text-[21px] whitespace-nowrap">1 / 1</span>
        <div className="ml-[33px]"><NavIcon d={Navs.next} /></div>
        <div className="ml-[27px]"><NavIcon d={Navs.last} /></div>
        <Sep className="ml-[15px]" />
        <div className="ml-[16px]"><GhostArrow /></div>
        <div className="ml-[18px]"><GhostArrow flip /></div>
        <Caret className="mt-[26px] ml-[16px]" />
      </div>

      {/* taskbar */}
      <div className="flex h-[80px] shrink-0 items-center bg-[linear-gradient(90deg,#45423a_0%,#3b3830_30%,#38352e_60%,#403931_75%,#2f2d2a_100%)] text-white">
        <div className="flex h-full w-[96px] shrink-0 items-center justify-center">
          <svg width="32" height="32" viewBox="0 0 32 32" fill="#fff">
            <path d="M0 4.500l13-1.800v12.500H0zM15 2.400L32 0v15.200H15zM0 17h13v12.300l-13-1.800zM15 17h17v15l-17-2.400z" />
          </svg>
        </div>
        <div className="flex h-full w-[575px] shrink-0 items-center border-x-2 border-y border-[#c9c9c9] bg-[#f0f0f0] pl-[22px] text-[#222]">
          <svg width="32" height="32" viewBox="0 0 32 32">
            <circle cx="20" cy="12" r="10" fill="none" stroke="#111" strokeWidth="2" />
            <path d="M13 20L1 32" stroke="#111" strokeWidth="2" />
          </svg>
          <span className="mt-[2px] ml-[24px] text-[28.500px] tracking-[-0.2px]">Type here to search</span>
          <div className="mr-[39px] ml-auto"><MaskIcon /></div>
        </div>
        <div className="flex h-full w-[102px] shrink-0 items-center justify-center">
          <svg width="32" height="32" viewBox="0 0 32 32" fill="none" stroke="#fff" strokeWidth="2">
            <path d="M0 2h14V0M0 30h14v2M2 9h15v15H2zM22 0v4M22 10v20M28 0v4" />
            <circle cx="27" cy="12" r="3" fill="#fff" stroke="none" />
            <path d="M27 18v14" />
          </svg>
        </div>
        <TaskSlot on><EdgeIcon /></TaskSlot>
        <TaskSlot on><ExplorerIcon /></TaskSlot>
        <TaskSlot>
          <WhatsAppIcon />
          <div className="absolute top-[38px] left-[25px] flex h-[34px] w-[56px] items-center justify-center rounded-full border-2 border-[#9a9a9a] bg-[#3b3830] text-[24px] tracking-[-0.5px] text-white">
            99+
          </div>
        </TaskSlot>
        <TaskSlot on><VsCodeIcon /></TaskSlot>
        <TaskSlot><ChromeIcon size={48} /></TaskSlot>
        <TaskSlot on><SpotifyIcon size={46} /></TaskSlot>
        <TaskSlot on><UTorrentIcon /></TaskSlot>
        <TaskSlot on><WordIcon /></TaskSlot>
        <TaskSlot on><RarIcon /></TaskSlot>
        <TaskSlot on><GearIcon /></TaskSlot>
        <TaskSlot on><AcrobatIcon /></TaskSlot>
        <TaskSlot on active><InfixIcon size={48} /></TaskSlot>

        <svg width="50" height="32" viewBox="0 0 50 32" className="ml-[52px] shrink-0">
          <defs>
            <linearGradient id="cloud" x1="0" y1="0" x2="0" y2="1">
              <stop offset="0" stopColor="#8fb8f0" />
              <stop offset="1" stopColor="#dbe8fa" />
            </linearGradient>
          </defs>
          <path d="M10 32Q0 32 0 24q0-7 8-8 1-6 7-6 3-9 12-9 8 0 11 8 11 2 11 14 0 9-9 9z" fill="url(#cloud)" />
        </svg>
        <span className="ml-[14px] text-[28px] tracking-[-0.8px]">25°C</span>
        <svg width="26" height="16" viewBox="0 0 26 16" className="ml-[50px] shrink-0">
          <path d="M1 15L13 2l12 13" fill="none" stroke="#fff" strokeWidth="1.800" />
        </svg>
        <div className="ml-[20px]"><SpotifyIcon size={30} /></div>
        <div className="ml-[17px]"><ChromeIcon size={32} /></div>
        <svg width="24" height="32" viewBox="0 0 24 32" className="ml-[22px] shrink-0" fill="none" stroke="#fff" strokeWidth="2">
          <path d="M2 6q9-8 18 0M2 26q9 8 18 0" />
          <rect x="1" y="9" width="15" height="14" rx="3" />
          <path d="M17 14l6-3v11l-6-3z" />
        </svg>
        <svg width="32" height="30" viewBox="0 0 32 30" className="ml-[19px] shrink-0" fill="none" stroke="#fff" strokeWidth="2">
          <path d="M3 0v6M9 0v6M1 6h10v5q0 3-5 3t-5-3zM6 14v15h22V11H12" />
          <rect x="15" y="13" width="12" height="14" fill="#fff" />
          <rect x="29" y="15" width="3" height="8" fill="#fff" stroke="none" />
        </svg>
        <svg width="26" height="28" viewBox="0 0 26 28" className="ml-[19px] shrink-0" fill="none">
          <path d="M1 27Q3 8 25 1" stroke="#8a8a8a" strokeWidth="2" />
          <path d="M7 27Q9 14 25 8" stroke="#fff" strokeWidth="2" />
          <path d="M13 27q1-7 12-11" stroke="#fff" strokeWidth="2" />
          <circle cx="20" cy="23" r="4" fill="#fff" />
        </svg>
        <svg width="34" height="30" viewBox="0 0 34 30" className="ml-[16px] shrink-0" fill="none">
          <path d="M1 10h6l9-8v26l-9-8H1z" stroke="#fff" strokeWidth="2" />
          <path d="M20 10q4 5 0 10M24 6q6 9 0 18" stroke="#fff" strokeWidth="2" />
          <path d="M29 1q8 14 0 28" stroke="#8a8a8a" strokeWidth="2" />
        </svg>
        <div className="ml-[18px] flex w-[114px] shrink-0 flex-col items-center text-[24px] leading-[37px] tracking-[-0.2px]">
          <span>2:56 AM</span>
          <span>8/20/2024</span>
        </div>
        <div className="relative ml-[35px] h-[46px] w-[50px] shrink-0">
          <div className="flex h-[26px] w-[32px] flex-col justify-center gap-[3px] bg-[#8a8a8a] px-[6px]">
            <div className="h-[2px] bg-[#2e2c29]" />
            <div className="h-[2px] bg-[#2e2c29]" />
            <div className="h-[2px] w-[12px] bg-[#2e2c29]" />
          </div>
          <div className="absolute top-[13px] left-[10px] flex h-[33px] w-[40px] items-center justify-center rounded-full border-2 border-[#bbb] bg-[#3b3830] text-[23px] font-semibold tracking-[-0.5px]">
            20
          </div>
        </div>
      </div>
    </div>
  );
}
